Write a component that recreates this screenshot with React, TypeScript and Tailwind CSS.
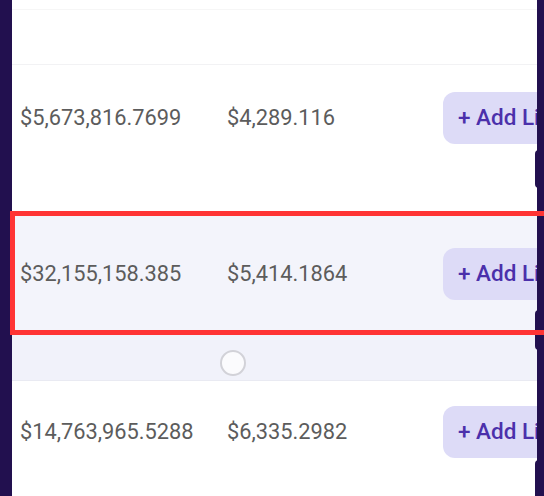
import React from 'react'

type Row = { tvl: string; volume: string }

const ROWS: Row[] = [
  { tvl: '$5,673,816.7699', volume: '$4,289.116' },
  { tvl: '$32,155,158.385', volume: '$5,414.1864' },
  { tvl: '$14,763,965.5288', volume: '$6,335.2982' },
]

function PoolRow({ row }: { row: Row }) {
  return (
    <div className="flex items-center pl-2 h-[52px]">
      <span className="w-[207px] shrink-0 text-[21.8px] text-[#5c5c5c]">{row.tvl}</span>
      <span className="w-[216px] shrink-0 text-[21.8px] text-[#5c5c5c]">{row.volume}</span>
      <button className="shrink-0 h-[52px] pl-[15px] pr-3 rounded-[12px] bg-[#dddbf7] text-[22.5px] font-medium text-[#4b30ab] whitespace-nowrap">
        + Add Li
      </button>
    </div>
  )
}

export default function App() {
  return (
    <div
      className="relative w-[544px] h-[496px] bg-[#22104f] flex overflow-hidden"
      style={{ fontFamily: 'Roboto, "Liberation Sans", sans-serif' }}
    >
      {/* left rail */}
      <div className="w-3 shrink-0" />

      {/* table panel */}
      <div className="w-[525px] shrink-0 bg-white overflow-hidden flex flex-col">
        <div className="h-[10px] border-b border-[#f6f6f6]" />
        <div className="h-[55px] border-b border-[#f2f2f4]" />

        {/* row 1 */}
        <div className="h-[146px] pt-[27px]">
          <PoolRow row={ROWS[0]} />
        </div>

        {/* row 2 (highlighted) */}
        <div className="h-[122px] bg-[#f3f4fb] pt-[37px]">
          <PoolRow row={ROWS[1]} />
        </div>

        {/* loader */}
        <div className="h-[48px] bg-[#f1f2fa] border-b border-[#e9eaf2] pt-[17px] pl-[208px]">
          <div className="w-[26px] h-[26px] rounded-full border-2 border-[#d2d2d8] bg-[#fbfbfd]" />
        </div>

        {/* row 3 */}
        <div className="flex-1 pt-[25px]">
          <PoolRow row={ROWS[2]} />
        </div>
      </div>

      {/* dark tabs peeking from the right */}
      <div className="absolute right-0 top-0 w-[7px] h-[36px] rounded-bl-md bg-[#22104f]" />
      <div className="absolute right-[5px] top-[150px] w-[4px] h-[38px] rounded-l-md bg-[#22104f]" />
      <div className="absolute right-[5px] top-[310px] w-[4px] h-[40px] rounded-l-md bg-[#22104f]" />
      <div className="absolute right-[5px] top-[460px] w-[4px] h-[40px] rounded-l-md bg-[#22104f]" />

      {/* highlight annotation */}
      <div className="absolute left-[10px] top-[211px] w-[540px] h-[124px] border-[5px] border-[#ff3434]" />
    </div>
  )
}
